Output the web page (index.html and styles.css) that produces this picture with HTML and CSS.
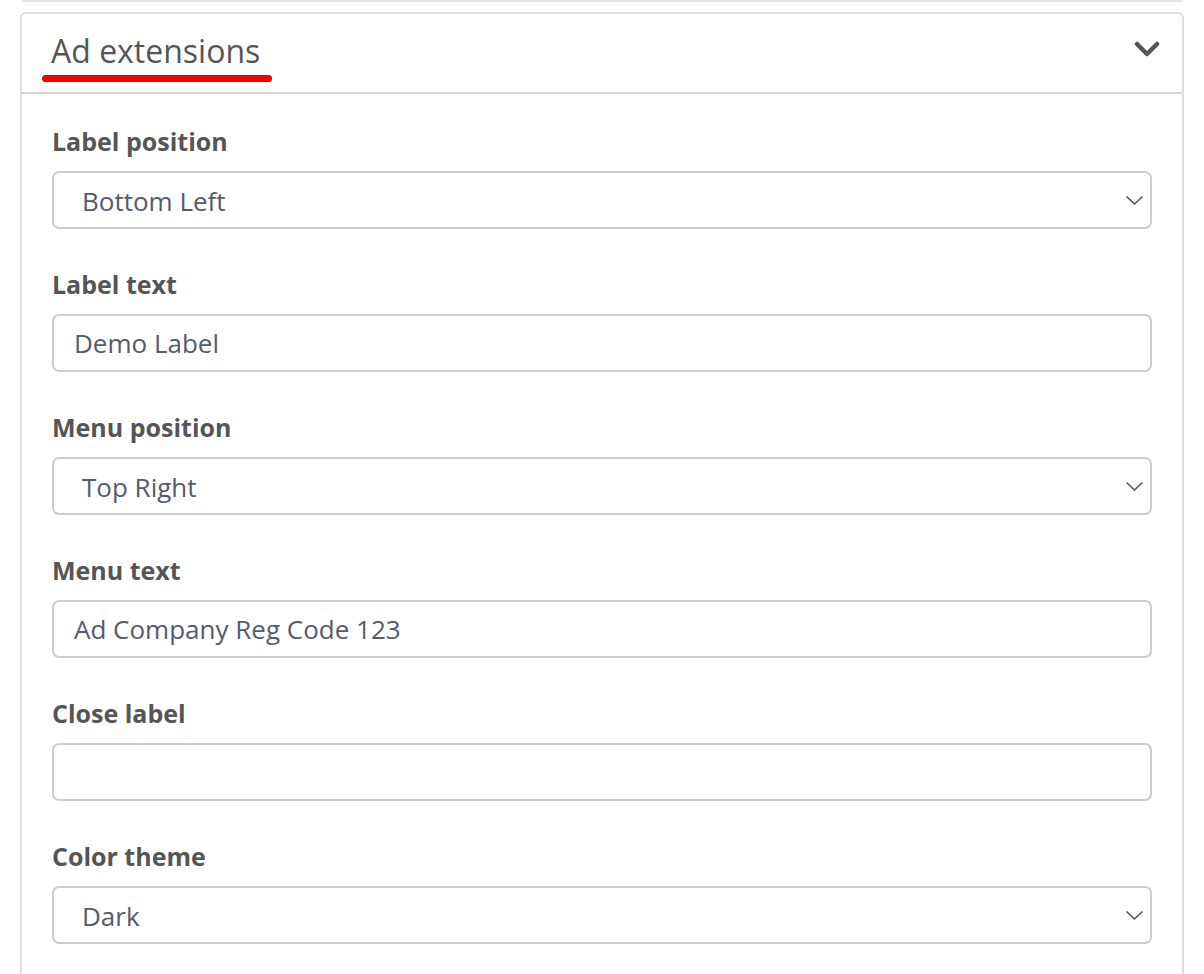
FILE: index.html
```html
<!DOCTYPE html>
<html lang="en">
<head>
    <meta charset="UTF-8">
    <meta name="viewport" content="width=device-width, initial-scale=1.0">
    <title>Ad extensions</title>
    <link rel="stylesheet" href="styles.css">
</head>
<body>
    <div class="prev-card"></div>
    <div class="card">
        <div class="card-header">
            <h2 class="card-title">Ad extensions</h2>
            <svg class="toggle" width="26" height="17" viewBox="0 0 26 17">
                <path d="M3 3 L13 13 L23 3" fill="none" stroke="#555" stroke-width="4.5" stroke-linecap="round" stroke-linejoin="round"/>
            </svg>
        </div>
        <div class="card-body">
            <div class="field">
                <label for="labelPosition">Label position</label>
                <div class="select-wrap">
                    <select id="labelPosition">
                        <option>Bottom Left</option>
                        <option>Bottom Right</option>
                        <option>Top Left</option>
                        <option>Top Right</option>
                    </select>
                    <svg class="caret" width="19" height="11" viewBox="0 0 19 11"><path d="M1.5 1.5 L9.5 9 L17.5 1.5" fill="none" stroke="#555" stroke-width="1.6"/></svg>
                </div>
            </div>
            <div class="field">
                <label for="labelText">Label text</label>
                <input type="text" id="labelText" value="Demo Label">
            </div>
            <div class="field">
                <label for="menuPosition">Menu position</label>
                <div class="select-wrap">
                    <select id="menuPosition">
                        <option>Top Right</option>
                        <option>Top Left</option>
                        <option>Bottom Left</option>
                        <option>Bottom Right</option>
                    </select>
                    <svg class="caret" width="19" height="11" viewBox="0 0 19 11"><path d="M1.5 1.5 L9.5 9 L17.5 1.5" fill="none" stroke="#555" stroke-width="1.6"/></svg>
                </div>
            </div>
            <div class="field">
                <label for="menuText">Menu text</label>
                <input type="text" id="menuText" value="Ad Company Reg Code 123">
            </div>
            <div class="field">
                <label for="closeLabel">Close label</label>
                <input type="text" id="closeLabel" value="">
            </div>
            <div class="field">
                <label for="colorTheme">Color theme</label>
                <div class="select-wrap">
                    <select id="colorTheme">
                        <option>Dark</option>
                        <option>Light</option>
                    </select>
                    <svg class="caret" width="19" height="11" viewBox="0 0 19 11"><path d="M1.5 1.5 L9.5 9 L17.5 1.5" fill="none" stroke="#555" stroke-width="1.6"/></svg>
                </div>
            </div>
        </div>
    </div>
</body>
</html>
```

FILE: styles.css
```css
body {
    font-family: "Open Sans", "Liberation Sans", sans-serif;
    margin: 0;
    background: #fff;
    color: #555;
}
.prev-card {
    margin: 0 21px 0 22px;
    border-top: 2px solid #e4e4e6;
    height: 10px;
}
.card {
    margin-left: 20px;
    width: 1160px;
    border: 2px solid #ddd;
    border-bottom: none;
    border-radius: 6px 6px 0 0;
    height: 960px;
}
.card-header {
    display: flex;
    align-items: center;
    justify-content: space-between;
    height: 78px;
    padding: 0 22px 0 29px;
    border-bottom: 2px solid #d4d4d4;
}
.card-title {
    position: relative;
    margin: 0;
    font-size: 32px;
    font-weight: 400;
    color: #555;
    line-height: 1;
    top: -2px;
}
.card-title::after {
    content: "";
    position: absolute;
    left: -9px;
    right: -12px;
    bottom: -15px;
    height: 7px;
    border-radius: 4px;
    background: #f20000;
}
.toggle {
    margin-top: -8px;
}
.card-body {
    padding: 31px 30px 0 30px;
}
.field {
    margin-bottom: 39px;
}
.field label {
    display: block;
    font-size: 25px;
    font-weight: 700;
    color: #555;
    line-height: 33px;
    margin-bottom: 13px;
}
input, select {
    display: block;
    width: 100%;
    box-sizing: border-box;
    height: 58px;
    border: 2px solid #cdcdcd;
    border-radius: 7px;
    background: #fff;
    font-family: inherit;
    font-size: 26px;
    color: #545b6b;
    outline: none;
}
input {
    padding: 0 20px;
}
select {
    appearance: none;
    -webkit-appearance: none;
    padding: 2px 60px 0 28px;
}
.select-wrap {
    position: relative;
}
.caret {
    position: absolute;
    right: 8px;
    top: 24px;
}
```
